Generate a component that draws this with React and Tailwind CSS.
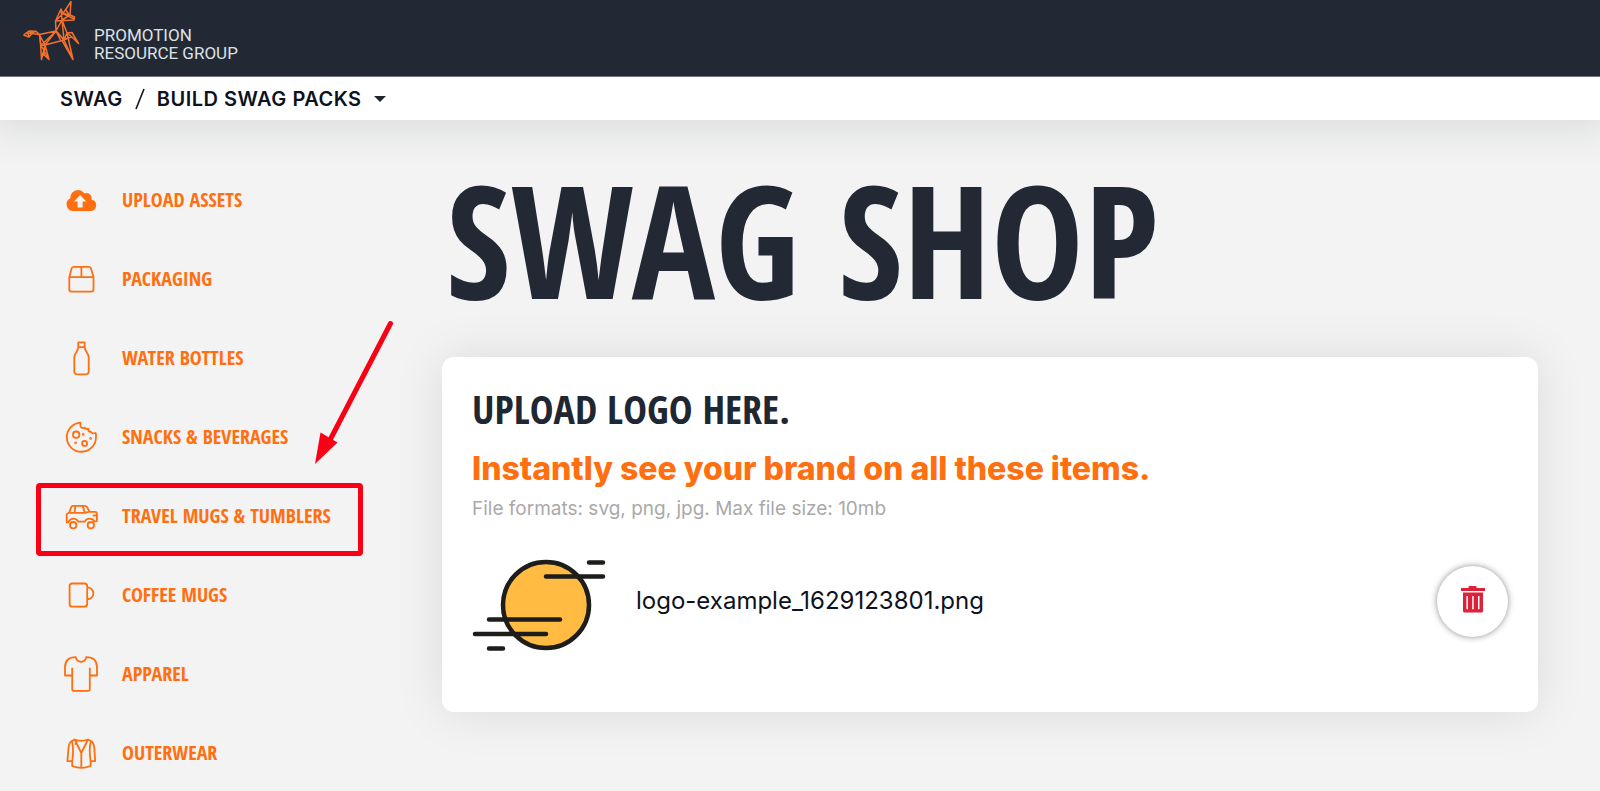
import React from 'react';

const CloudIcon = () => (
  <svg viewBox="0 0 34 34" className="h-[34px] w-[34px]" fill="#ff6f0f">
    <path
      fillRule="evenodd"
      d="M9.5 28A6.7 6.7 0 0 1 6.3 15.3A7.8 7.8 0 0 1 13.8 7c2.8 0 5.2 1.3 6.6 3.6a5 5 0 0 1 7 6A5.8 5.8 0 0 1 27.5 28zM16.1 12 10 18.4h3.6v6.2h5v-6.2h3.6z"
    />
  </svg>
);

const LineIcon = ({ children }) => (
  <svg
    viewBox="0 0 34 34"
    className="h-[34px] w-[34px] overflow-visible"
    fill="none"
    stroke="#ff6f0f"
    strokeWidth="1.8"
    strokeLinecap="round"
    strokeLinejoin="round"
  >
    {children}
  </svg>
);

const categories = [
  { name: 'Upload Assets', icon: <CloudIcon /> },
  {
    name: 'Packaging',
    icon: (
      <LineIcon>
        <path d="M5.3 15.2 7.6 6.6Q8 4.800 9.8 4.800h15q1.8 0 2.2 1.8l2.5 8.600v12.400q0 2-2 2H7.300q-2 0-2-2zM5.3 15.200h24.200M17.400 4.800v10.400" />
      </LineIcon>
    ),
  },
  {
    name: 'Water Bottles',
    icon: (
      <LineIcon>
        <path d="M14.3 1.3h6.4v4.8h-6.4zM14.3 6.1c0 4.4-4 5.4-4 10.5v14.2q0 2 2 2.3 5.2.6 10.4 0 2-.3 2-2.3V16.6c0-5.1-4-6.1-4-10.5" />
      </LineIcon>
    ),
  },
  {
    name: 'Snacks & Beverages',
    icon: (
      <LineIcon>
        <path d="M16.5 2.6A14.6 14.6 0 1 0 32 17.2c.2-1.6 0-3-.4-4.2-2 .8-4.2.4-4.9-1.5-1 .5-2 .2-2.3-.8-.3-.7 0-1.3.3-1.9-1.6.4-3.2.1-4.3-1.2-1.3 1-3.3.3-3.8-1.4-.4-1.3-.2-2.5-.1-3.6z" />
        <circle cx="12.2" cy="14.7" r="3.2" />
        <circle cx="20.6" cy="23.4" r="2.5" />
        <circle cx="19.2" cy="14.4" r="0.5" />
        <circle cx="26.6" cy="18.4" r="0.5" />
        <circle cx="11.6" cy="22.8" r="0.5" />
      </LineIcon>
    ),
  },
  {
    name: 'Travel Mugs & Tumblers',
    highlighted: true,
    icon: (
      <LineIcon>
        <path d="M3.4 23.4H2.7V15l2.6-1.4 1.8-5.2q.5-1.6 2.2-1.6h11.4q1.5 0 2.2 1.2l2.8 4.9h5.2q2 0 2 2v7.2l-2.4.5q-1.5-3-4.9-3-3.4 0-4.8 3h-6.6q-1.4-3-4.8-3-2.8 0-5.4 3.8M5.3 13.8H21l3.5-.9M11.2 7l-.4 6.8M20.8 13.6 18.6 7M29.5 16.5h3" />
        <circle cx="9.2" cy="26.2" r="3.2" />
        <circle cx="26.8" cy="26.2" r="3.2" />
      </LineIcon>
    ),
  },
  {
    name: 'Coffee Mugs',
    icon: (
      <LineIcon>
        <path d="M8 5.5h12.6q2.6 0 2.6 2.6v17.6q0 3-3 3H8.6q-3 0-3-3V8.1q0-2.6 2.4-2.6zM23.2 9.4c3.5 0 6.2 2.6 6.2 6s-2.7 6-6.2 6" />
      </LineIcon>
    ),
  },
  {
    name: 'Apparel',
    icon: (
      <LineIcon>
        <path d="M11.8.2q.8 4.6 5.2 4.6T22.2.2Q33 .2 33 10.5v8h-7.2v-7V32q0 1.8-1.8 1.8H10q-1.8 0-1.8-1.8V11.5v7H1v-8Q1 .2 11.8.2z" />
      </LineIcon>
    ),
  },
  {
    name: 'Outerwear',
    icon: (
      <LineIcon>
        <path d="M10.8 3.5q6.5 2.6 13.2 0l2.6 1.3q3 1.5 3.6 6.2l1 14.2h-4.6V30q-9.2 3.6-18.4 0v-4.8H3.4L4.6 11q.6-4.7 3.6-6.2zM10.8 3.5 17.3 17 24 3.5M17.3 17v14.4M8.2 25.2c.6-4 1.8-12-.2-20M26.6 25.2c-.6-4-1.8-12 .2-20M12.4 5.4 11.4 8" />
      </LineIcon>
    ),
  },
];

const UnicornLogo = () => (
  <svg
    viewBox="20 0 62 64"
    className="h-16 w-[62px]"
    fill="none"
    stroke="#f4702a"
    strokeWidth="1.5"
    strokeLinejoin="round"
  >
    {/* tail */}
    <path d="M23.5 35 29 31l7 .3 3.3 3.2M23.5 35l5.5 2 3-3.5 7.3 1M29 31l3 2.5M26 33.5l5-.5 5-1.7M29 37l-1-4" />
    {/* body */}
    <path d="M39.3 34.5 56 31 45 45l-5.7-10.5L41 45.5 56 31 64 40 45 45 56 31 61 41M45 45 39.3 34.5" />
    {/* hind legs */}
    <path d="M40 36 41.5 59.5 45 45 41 45.5l8 14L42 53M45 45l-1 11M45 45l4 14.5" />
    {/* neck and head */}
    <path d="M56 31 55.5 21 61 9l2 4.5L71 1.5 70 15l4.5 2-.5 3-9 .5-9.5.5M56 31l6-11 2 20-8-9M61 9l1 11M55.5 21 63 13.5 70 15 62 20M63 13.5 74 19M66 10l3 5M62 20l5 13" />
    {/* front legs */}
    <path d="M64 40 67 33l5-.5 6.5 11L72 37l-5-4M64 40l4-2 4-1M64 40 73 59.5 67 33M64 40l-2 .5L73 59.5" />
  </svg>
);

const BrandMark = () => (
  <svg viewBox="0 0 134 92" className="h-[92px] w-[134px] shrink-0" role="img" aria-label="Uploaded logo">
    <circle cx="74" cy="46" r="43" fill="#ffbb42" stroke="#1d1d1b" strokeWidth="4.5" />
    <path
      d="M117 3.5h14M74 17.5h57M17 60.5h71M3 75h71M17 89.5h14"
      stroke="#1d1d1b"
      strokeWidth="4.5"
      strokeLinecap="round"
    />
  </svg>
);

const TrashIcon = () => (
  <svg viewBox="0 0 24 27" className="h-[27px] w-6" fill="#dc2138">
    <path d="M0 2h7.5V.8Q7.5 0 8.5 0h6q1 0 1 .8V2H24v3H0z" />
    <path
      fillRule="evenodd"
      d="M2 6.5h20V25q0 1.5-1.5 1.5h-17Q2 26.5 2 25zM5.4 10v13.2h1.5V10zM11.2 10v13.2h1.5V10zM17 10v13.2h1.5V10z"
    />
  </svg>
);

const Arrow = () => (
  <svg viewBox="0 0 80 145" className="absolute bottom-20 left-[251px] h-[145px] w-20" aria-hidden="true">
    <path d="M75.5 3.5 15 120" stroke="#fa0014" strokeWidth="5" strokeLinecap="round" />
    <path d="M0 144 5.5 112.5 22.5 122.5z" fill="#fa0014" />
  </svg>
);

const App = () => {
  return (
    <div className="min-h-screen overflow-x-clip bg-[#f3f3f3] font-[Inter,sans-serif] text-[#1f2733]">
      {/* Header */}
      <header className="relative z-10 flex h-[77px] items-start border-b border-gray-500 bg-[#222935] pl-5">
        <UnicornLogo />
        <p className="ml-3 mt-[26px] font-[Roboto,sans-serif] text-[17px] leading-[18px] text-[#dfe1e4]">
          PROMOTION
          <br />
          RESOURCE GROUP
        </p>
      </header>

      {/* Breadcrumb */}
      <nav className="relative flex h-[43px] items-center bg-white pl-[60px] text-xl font-semibold tracking-wide text-[#0d1220] shadow-[0_0_40px_10px_rgba(20,25,35,0.10)]">
        <a href="#swag">SWAG</a>
        <svg viewBox="0 0 10 22" className="mx-3 h-[22px] w-[10px]" aria-hidden="true">
          <path d="M9 1 1 21" stroke="#0d1220" strokeWidth="1.6" />
        </svg>
        <button type="button" className="flex items-center gap-3 tracking-wide">
          BUILD SWAG PACKS
          <svg viewBox="0 0 12 6" className="h-[6px] w-3" fill="#1f2733">
            <path d="M0 0h12L6 6z" />
          </svg>
        </button>
      </nav>

      <div className="flex items-start">
        {/* Categories */}
        <aside className="w-[442px] shrink-0 pl-16 pt-[50px]">
          <ul className="flex flex-col gap-5">
            {categories.map((category) => (
              <li key={category.name} className="relative h-[59px]">
                <a
                  href="#category"
                  className="flex h-full items-center gap-6 font-['Open_Sans_Condensed','Roboto_Condensed',sans-serif] text-xl font-bold uppercase text-[#ff6f0f]"
                >
                  {category.icon}
                  {category.name}
                </a>
                {category.highlighted && (
                  <>
                    <span className="absolute -bottom-[11px] -left-7 -top-[3px] w-[327px] rounded-sm border-[5px] border-[#fa0014]" />
                    <Arrow />
                  </>
                )}
              </li>
            ))}
          </ul>
        </aside>

        {/* Shop */}
        <main className="min-w-0 flex-1 pr-[62px] pt-[39px]">
          <h1 className="whitespace-nowrap pl-1 font-['Open_Sans_Condensed','Roboto_Condensed',sans-serif] text-[156px] font-bold leading-[160px] text-[#222935]">
            SWAG SHOP
          </h1>

          <section className="mt-[38px] rounded-xl bg-white px-[30px] pb-[61px] pt-7 shadow-[0_0_50px_rgba(20,20,20,0.10)]">
            <h2 className="font-['Open_Sans_Condensed','Roboto_Condensed',sans-serif] text-[40px] font-bold leading-[48px]">
              UPLOAD LOGO HERE.
            </h2>
            <p className="mt-4 text-[32px] font-extrabold leading-10 text-[#ff6f0f]">
              Instantly see your brand on all these items.
            </p>
            <p className="mt-[6px] text-[19px] leading-7 text-[#a9a9a9]">
              File formats: svg, png, jpg. Max file size: 10mb
            </p>
            <div className="mt-9 flex items-center">
              <BrandMark />
              <span className="ml-[30px] pb-2 text-2xl text-[#0d1220]">logo-example_1629123801.png</span>
              <button
                type="button"
                aria-label="Delete logo"
                className="mb-2 ml-auto flex h-[71px] w-[71px] items-center justify-center rounded-full bg-white pb-1 shadow-[0_0_6px_rgba(20,25,35,0.5)]"
              >
                <TrashIcon />
              </button>
            </div>
          </section>
        </main>
      </div>
    </div>
  );
};

export default App;
